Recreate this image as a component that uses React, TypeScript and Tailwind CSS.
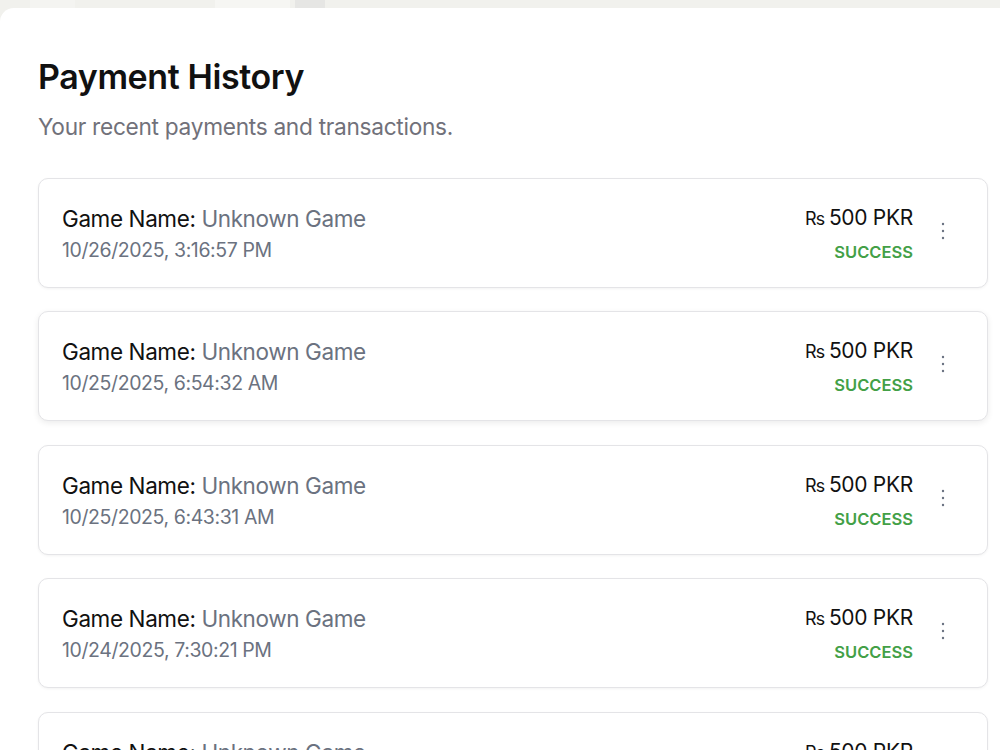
import React from "react";

const rows = [
  "10/26/2025, 3:16:57 PM",
  "10/25/2025, 6:54:32 AM",
  "10/25/2025, 6:43:31 AM",
  "10/24/2025, 7:30:21 PM",
  "10/24/2025, 7:02:11 PM",
];

function Dots() {
  return (
    <svg width="4" height="18" viewBox="0 0 4 18" className="text-gray-500">
      <circle cx="2" cy="2" r="1.2" fill="currentColor" />
      <circle cx="2" cy="9" r="1.2" fill="currentColor" />
      <circle cx="2" cy="16" r="1.2" fill="currentColor" />
    </svg>
  );
}

export default function App() {
  return (
    <div
      className="w-[1000px] h-[750px] overflow-hidden bg-[#f1f1ed] flex flex-col"
      style={{ fontFamily: "Inter, 'Noto Sans', sans-serif" }}
    >
      <div className="h-[8px] shrink-0 flex">
        <div className="w-[30px]" />
        <div className="w-[45px] bg-[#f4f4f1]" />
        <div className="w-[140px]" />
        <div className="w-[75px] bg-[#f6f6f3]" />
        <div className="w-[5px]" />
        <div className="w-[30px] bg-[#e6e6e4]" />
      </div>
      <div className="flex-1 bg-white rounded-tl-[14px] pl-[38px] pr-[12px] pt-[47px]">
        <h1 className="text-[34px] leading-[44px] font-semibold text-[#111] tracking-[-0.4px]">
          Payment History
        </h1>
        <p className="mt-[13px] text-[22.7px] leading-[30px] text-[#71717a] tracking-[-0.3px]">
          Your recent payments and transactions.
        </p>
        <div className="mt-[36px] flex flex-col gap-[23.4px]">
          {rows.map((d, i) => (
            <div
              key={i}
              className={
                "h-[110px] shrink-0 rounded-[10px] border border-[#e4e4e7] bg-white flex items-center pl-[23px] pr-[42px] " +
                (i === 1
                  ? "shadow-[0_2px_6px_rgba(0,0,0,0.08)]"
                  : "shadow-[0_1px_3px_rgba(0,0,0,0.05)]")
              }
            >
              <div className="flex-1 flex flex-col pt-[1px]">
                <div className="text-[22.5px] leading-[30px] tracking-[-0.4px] text-[#111]">
                  Game Name: <span className="text-[#6b7280]">Unknown Game</span>
                </div>
                <div className="mt-[3px] text-[19.5px] leading-[26px] text-[#6b7280] tracking-[-0.4px]">
                  {d}
                </div>
              </div>
              <div className="flex flex-col items-end">
                <div className="text-[21px] leading-[28px] text-[#111] tracking-[-0.3px]">
                  <span className="text-[18px] tracking-[-2px]">₨</span> 500 PKR
                </div>
                <div className="mt-[9px] text-[16.5px] leading-[20px] font-semibold text-[#43a047]">
                  SUCCESS
                </div>
              </div>
              <div className="ml-[28px] -mt-[4px]">
                <Dots />
              </div>
            </div>
          ))}
        </div>
      </div>
    </div>
  );
}
